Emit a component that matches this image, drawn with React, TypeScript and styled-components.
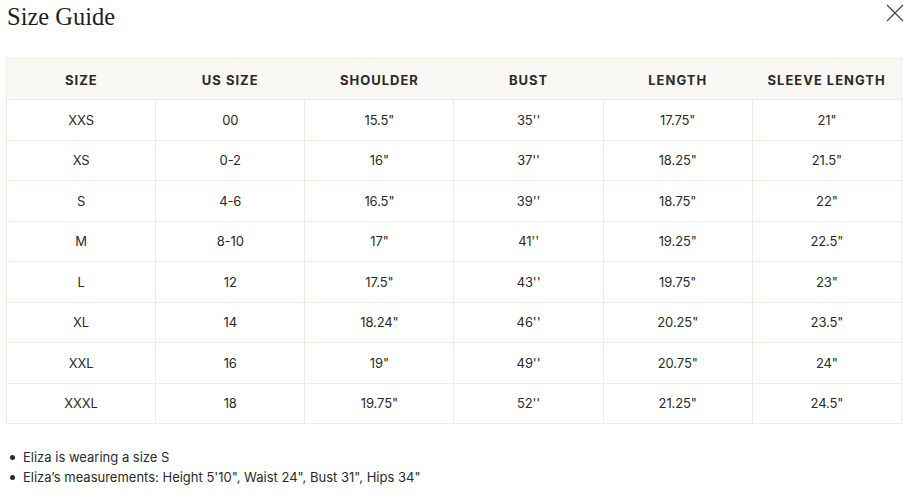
import React from "react";
import styled, { createGlobalStyle } from "styled-components";

const Global = createGlobalStyle`
  html, body { margin: 0; padding: 0; background: #fff; }
  body { font-family: Inter, "Liberation Sans", Arial, sans-serif; color: #222; }
`;

const Page = styled.div`
  width: 911px;
  height: 502px;
  box-sizing: border-box;
  padding: 0 10px 0 6px;
  display: flex;
  flex-direction: column;
`;

const Header = styled.div`
  display: flex;
  justify-content: space-between;
  align-items: flex-start;
  height: 58px;
`;

const Title = styled.h2`
  margin: 0;
  padding: 2px 0 0 1px;
  font-family: "Liberation Serif", "Times New Roman", serif;
  font-weight: 400;
  font-size: 24.5px;
  line-height: 30px;
  color: #1f1f1f;
`;

const CloseButton = styled.button`
  border: 0;
  background: transparent;
  padding: 0;
  margin: 2px -5px 0 0;
  width: 22px;
  height: 22px;
  display: flex;
  align-items: center;
  justify-content: center;
  cursor: pointer;
  color: #444;
`;

const Table = styled.table`
  width: 896px;
  border-collapse: collapse;
  table-layout: fixed;
  border: 1px solid #f0ece2;
`;

const HeadCell = styled.th`
  background: #f9f8f4;
  height: 38px;
  padding: 2px 0 0;
  font-size: 13px;
  font-weight: 700;
  letter-spacing: 1px;
  color: #2a2a2a;
  text-align: center;
  border: 0;
`;

const Cell = styled.td`
  height: 39.5px;
  padding: 0;
  font-size: 13px;
  font-weight: 400;
  color: #2a2a2a;
  text-align: center;
  border: 1px solid #f0ece2;
  letter-spacing: -0.1px;
`;

const Notes = styled.ul`
  margin: 23px 0 0;
  padding: 0 0 0 4px;
  list-style: none;
  font-size: 13px;
  line-height: 20px;
  color: #2a2a2a;
`;

const Note = styled.li`
  display: flex;
  align-items: center;
  &::before {
    content: "";
    width: 5px;
    height: 5px;
    border-radius: 50%;
    background: #2a2a2a;
    margin-right: 8px;
    flex: none;
  }
`;

const columns = ["SIZE", "US SIZE", "SHOULDER", "BUST", "LENGTH", "SLEEVE LENGTH"];

const rows = [
  ["XXS", "00", "15.5\"", "35''", "17.75\"", "21\""],
  ["XS", "0-2", "16\"", "37''", "18.25\"", "21.5\""],
  ["S", "4-6", "16.5\"", "39''", "18.75\"", "22\""],
  ["M", "8-10", "17\"", "41''", "19.25\"", "22.5\""],
  ["L", "12", "17.5\"", "43''", "19.75\"", "23\""],
  ["XL", "14", "18.24\"", "46''", "20.25\"", "23.5\""],
  ["XXL", "16", "19\"", "49''", "20.75\"", "24\""],
  ["XXXL", "18", "19.75\"", "52''", "21.25\"", "24.5\""],
];

export default function App() {
  return (
    <>
      <Global />
      <Page>
        <Header>
          <Title>Size Guide</Title>
          <CloseButton aria-label="Close">
            <svg width="20" height="20" viewBox="0 0 20 20" fill="none" stroke="currentColor" strokeWidth="1.2">
              <path d="M2 2 L18 18 M18 2 L2 18" />
            </svg>
          </CloseButton>
        </Header>
        <Table>
          <thead>
            <tr>
              {columns.map((c) => (
                <HeadCell key={c}>{c}</HeadCell>
              ))}
            </tr>
          </thead>
          <tbody>
            {rows.map((r) => (
              <tr key={r[0]}>
                {r.map((v, i) => (
                  <Cell key={i}>{v}</Cell>
                ))}
              </tr>
            ))}
          </tbody>
        </Table>
        <Notes>
          <Note>Eliza is wearing a size S</Note>
          <Note>Eliza’s measurements: Height 5'10", Waist 24", Bust 31", Hips 34"</Note>
        </Notes>
      </Page>
    </>
  );
}
